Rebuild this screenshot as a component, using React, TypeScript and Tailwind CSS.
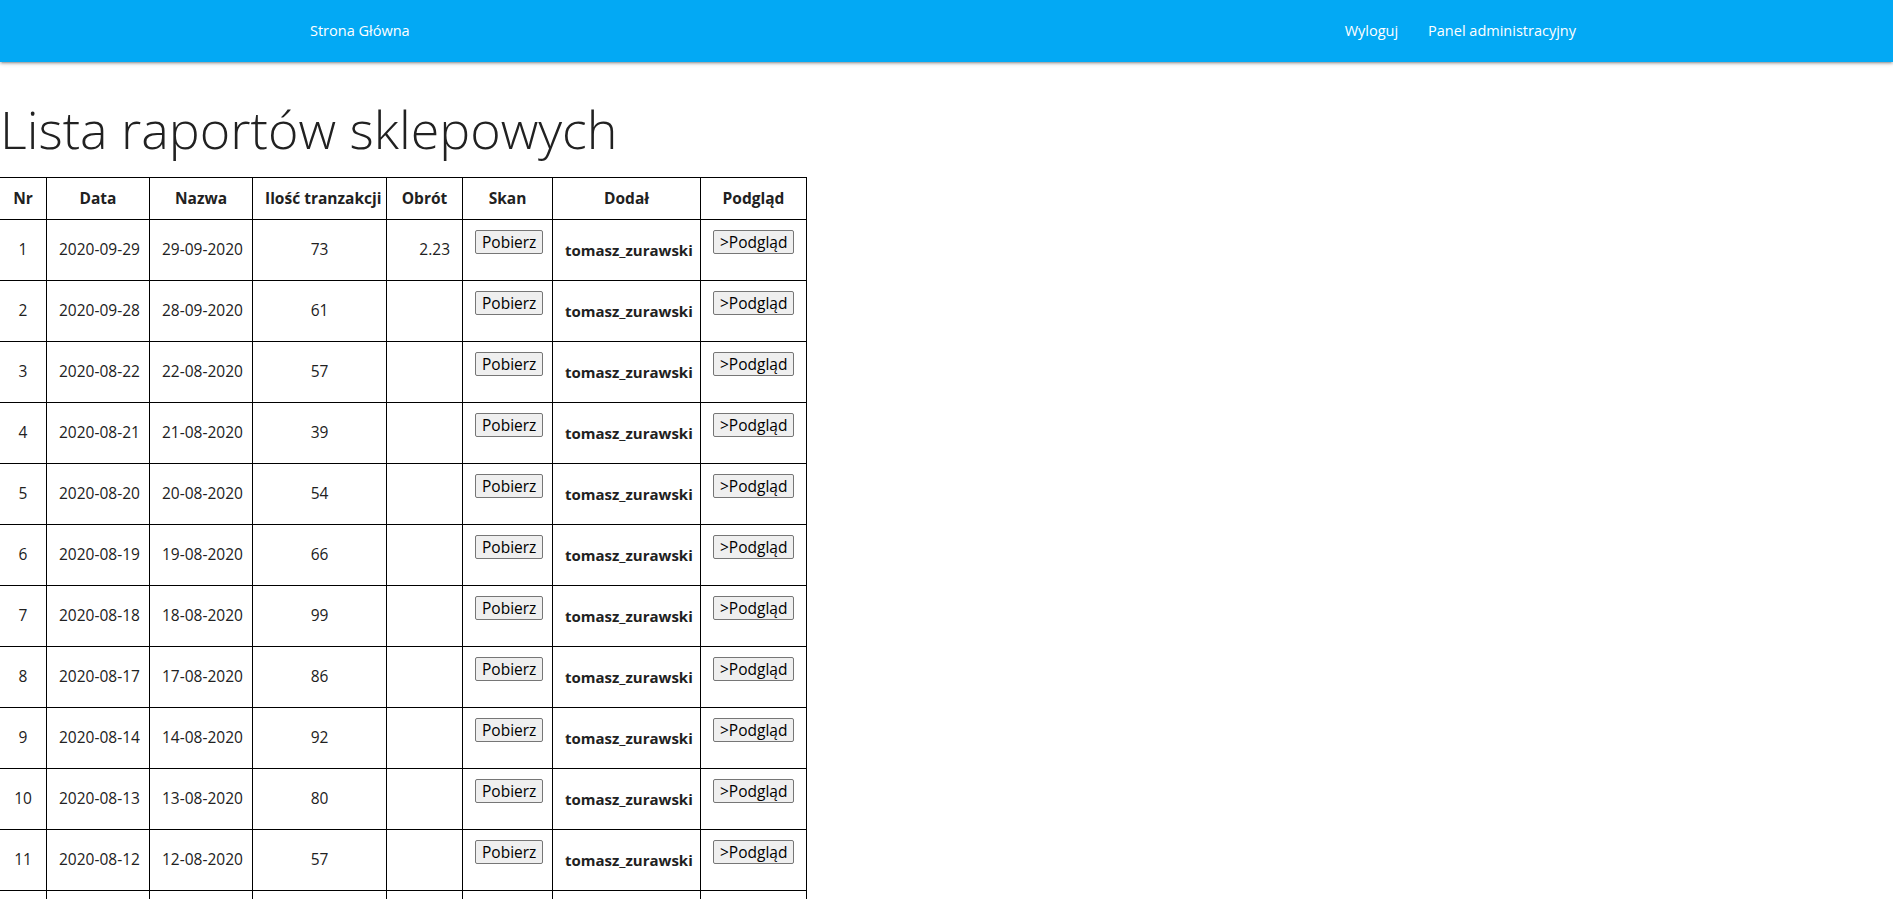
import React from "react";

const ROWS: [number, string, string, number, string][] = [
  [1, "2020-09-29", "29-09-2020", 73, "2.23"],
  [2, "2020-09-28", "28-09-2020", 61, ""],
  [3, "2020-08-22", "22-08-2020", 57, ""],
  [4, "2020-08-21", "21-08-2020", 39, ""],
  [5, "2020-08-20", "20-08-2020", 54, ""],
  [6, "2020-08-19", "19-08-2020", 66, ""],
  [7, "2020-08-18", "18-08-2020", 99, ""],
  [8, "2020-08-17", "17-08-2020", 86, ""],
  [9, "2020-08-14", "14-08-2020", 92, ""],
  [10, "2020-08-13", "13-08-2020", 80, ""],
  [11, "2020-08-12", "12-08-2020", 57, ""],
  [12, "2020-08-11", "11-08-2020", 48, ""],
];

const cell = "border border-black px-3 whitespace-nowrap";
const btn =
  "inline-block h-[24px] rounded-[2px] border border-[#767676] bg-[#efefef] px-[6px] align-top text-[15.5px] leading-[20px] text-black";

export default function App() {
  return (
    <div className="h-screen overflow-hidden bg-white font-['Open_Sans',sans-serif] text-[#212121]">
      {/* Navbar */}
      <nav className="flex h-[62px] items-center bg-[#03a9f4] pl-[310px] pr-[317px] text-[14.5px] text-white shadow-[0_2px_2px_0_rgba(0,0,0,0.14),0_3px_1px_-2px_rgba(0,0,0,0.12),0_1px_5px_0_rgba(0,0,0,0.2)]">
        <a href="#">Strona Główna</a>
        <div className="ml-auto flex gap-[30px]">
          <a href="#">Wyloguj</a>
          <a href="#">Panel administracyjny</a>
        </div>
      </nav>

      <h1 className="mt-[37px] mb-[18px] text-[52px] font-light leading-[60px] text-[#212121]">
        Lista raportów sklepowych
      </h1>

      <table className="-ml-px w-[807px] table-fixed border-collapse text-[15.5px]">
        <colgroup>
          <col className="w-[47px]" />
          <col className="w-[103px]" />
          <col className="w-[103px]" />
          <col className="w-[134px]" />
          <col className="w-[76px]" />
          <col className="w-[90px]" />
          <col className="w-[148px]" />
          <col className="w-[106px]" />
        </colgroup>
        <thead>
          <tr className="h-[42px]">
            <th className={`${cell} px-0`}>Nr</th>
            <th className={`${cell} px-0`}>Data</th>
            <th className={`${cell} px-0`}>Nazwa</th>
            <th className={`${cell} px-0`}>Ilość tranzakcji</th>
            <th className={`${cell} px-0`}>Obrót</th>
            <th className={`${cell} px-0`}>Skan</th>
            <th className={`${cell} px-0`}>Dodał</th>
            <th className={`${cell} px-0`}>Podgląd</th>
          </tr>
        </thead>
        <tbody>
          {ROWS.map(([nr, data, nazwa, ilosc, obrot]) => (
            <tr key={nr} className="h-[61px]">
              <td className={`${cell} px-0 text-center`}>{nr}</td>
              <td className={`${cell} px-0 text-center`}>{data}</td>
              <td className={`${cell} px-0 text-center`}>{nazwa}</td>
              <td className={`${cell} text-center`}>{ilosc}</td>
              <td className={`${cell} text-right`}>{obrot}</td>
              <td className={`${cell} px-0 pt-[10px] text-center align-top`}>
                <button className={btn}>Pobierz</button>
              </td>
              <td className={`${cell} px-0 text-center text-[15px] font-bold`}>
                tomasz_zurawski
              </td>
              <td className={`${cell} px-0 pt-[10px] text-center align-top`}>
                <button className={btn}>&gt;Podgląd</button>
              </td>
            </tr>
          ))}
        </tbody>
      </table>
    </div>
  );
}
